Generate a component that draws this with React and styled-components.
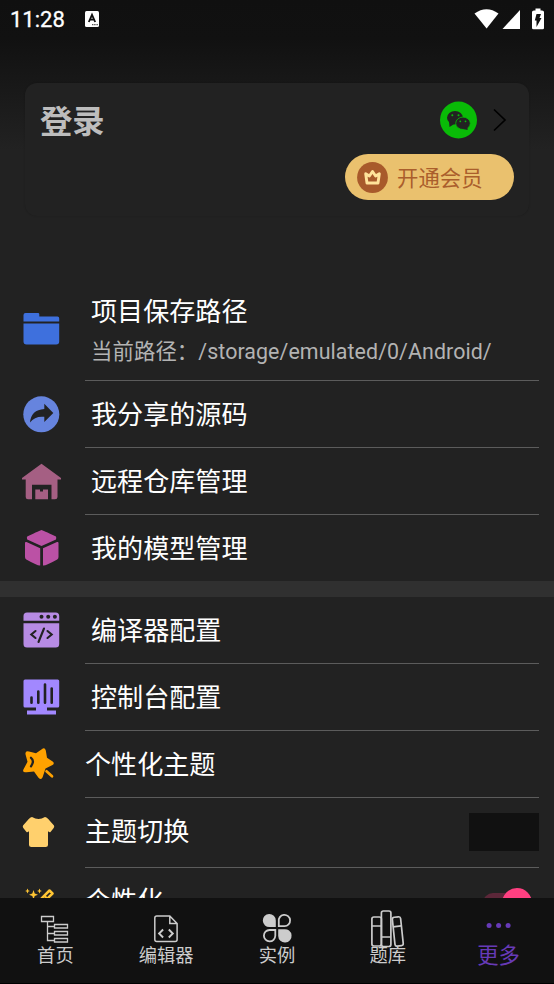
import React from "react";
import styled, { createGlobalStyle } from "styled-components";

const Global = createGlobalStyle`
  * { box-sizing: border-box; }
  body { margin: 0; background: #222; }
  svg { display: block; flex: none; }
`;

const Page = styled.div`
  width: 554px;
  height: 984px;
  display: flex;
  flex-direction: column;
  background: #222;
  color: #fff;
  font-family: Roboto, "Noto Sans CJK SC", sans-serif;
  overflow: hidden;
`;

const Content = styled.main`
  height: 898px;
  overflow: hidden;
  background: linear-gradient(#101010 0, #111 38px, #222 150px);
`;

const StatusBar = styled.header`
  height: 38px;
  display: flex;
  align-items: center;
  padding: 0 9px 0 10px;
`;

const Clock = styled.span`
  font-size: 22px;
  font-weight: 400;
  -webkit-text-stroke: 0.3px #fff;
  line-height: 38px;
  width: 74px;
  padding-top: 1px;
`;

const StatusIcons = styled.div`
  display: flex;
  margin-left: auto;
`;

const LoginCard = styled.section`
  width: 504px;
  height: 133px;
  margin: 45px 25px 0;
  border-radius: 12px;
  background: #222;
  box-shadow: 0 0 2px rgba(0, 0, 0, 0.2);
  padding: 18px 15px 16px 15px;
  display: flex;
  flex-direction: column;
  justify-content: space-between;
`;

const LoginLine = styled.div`
  display: flex;
  align-items: center;
  height: 38px;
`;

const LoginTitle = styled.h1`
  margin: 0 auto 0 0;
  padding-top: 4px;
  font-size: 32.3px;
  line-height: 38px;
  font-weight: 700;
  color: #bdbdbd;
`;

const VipButton = styled.button`
  align-self: flex-end;
  display: flex;
  align-items: center;
  gap: 9px;
  width: 169px;
  height: 46px;
  padding: 0 0 0 12px;
  border: 0;
  border-radius: 23px;
  background: #eac16e;
  color: #aa5e2c;
  font: 400 21.4px/44px Roboto, "Noto Sans CJK SC", sans-serif;
`;

const VipLabel = styled.span`
  padding-top: 3px;
`;

const Menu = styled.div`
  padding-top: 60px;
`;

const Row = styled.div`
  height: ${(p) => p.$height || 67}px;
  display: flex;
  align-items: center;
  padding-right: 15px;
`;

const IconCell = styled.div`
  width: 85px;
  flex: none;
  padding-left: ${(p) => (p.$inset ? 21 : 18)}px;
`;

const RowBody = styled.div`
  flex: 1;
  height: 100%;
  display: flex;
  align-items: center;
  justify-content: space-between;
  padding-left: ${(p) => (p.$inset ? 6 : 0)}px;
  border-bottom: 1px solid ${(p) => (p.$last ? "transparent" : "#5c5c5c")};
`;

const RowText = styled.div`
  display: flex;
  flex-direction: column;
  margin-top: ${(p) => p.$shift}px;
`;

const RowTitle = styled.span`
  font-size: 26.1px;
  line-height: 40px;
`;

const RowNote = styled.span`
  font-size: 21.4px;
  line-height: 39px;
  letter-spacing: 0.07px;
  color: #b3b3b3;
  white-space: nowrap;
`;

const Band = styled.div`
  height: 16px;
  background: #303030;
`;

const Swatch = styled.div`
  width: 70px;
  height: 38px;
  margin-bottom: 2px;
  background: #111;
`;

const Switch = styled.div`
  width: 49px;
  height: 20px;
  margin: 5px 7px 0 0;
  border-radius: 10px;
  background: #5c2739;
  display: flex;
  align-items: center;
  justify-content: flex-end;
`;

const Thumb = styled.div`
  width: 30px;
  height: 30px;
  flex: none;
  border-radius: 50%;
  background: #ff4081;
`;

const Nav = styled.nav`
  height: 86px;
  display: grid;
  grid-template-columns: repeat(5, 1fr);
  background: #111;
  border-bottom: 1px solid #000;
`;

const NavItem = styled.div`
  display: flex;
  flex-direction: column;
  align-items: center;
  padding-top: 10px;
  color: ${(p) => (p.$active ? "#673ab7" : "#ccc")};
`;

const NavLabel = styled.span`
  font-size: ${(p) => (p.$active ? 21.3 : 18.3)}px;
  line-height: 20px;
  margin-top: -2px;
`;

const D = "#222";

const KeyboardIcon = () => (
  <svg width="16" height="18" viewBox="0 0 16 18">
    <rect x="1" y="1" width="14" height="16" rx="1.5" fill="#fff" />
    <path d="M4.8 12 8 4.8l3.2 7.2M6 9.7h4" fill="none" stroke="#111" strokeWidth="1.8" />
    <path d="M8 14.7h6" stroke="#333" strokeWidth="1" strokeDasharray="1.2 .5" />
  </svg>
);

const SignalIcons = () => (
  <svg width="72" height="24" viewBox="473 7 72 24">
    <path d="M474.5 13.6Q486.500 5 498.500 13.600L486.600 28.500Z" fill="#fff" />
    <path d="M520 10V29H502.500Z" fill="#fff" />
    <path d="M535.500 8.500H540.500V10.500H542Q544 10.500 544 12V28Q544 29.300 542.700 29.300H533.500Q532 29.300 532 28V12Q532 10.500 534 10.500H535.500Z" fill="#fff" />
    <path d="M536.500 14H541L539.500 18H541.500L536.500 27V20.500H534.800Z" fill="#111" />
  </svg>
);

const WeChatIcon = () => (
  <svg width="38" height="38" viewBox="440 101 38 38">
    <circle cx="458.500" cy="120" r="18.500" fill="#09bb07" />
    <ellipse cx="455" cy="117.700" rx="8" ry="6.800" fill={D} />
    <path d="M449 121.500 449.500 127 455 123.500Z" fill={D} />
    <ellipse cx="463" cy="123.300" rx="7.300" ry="6.200" fill={D} stroke="#09bb07" strokeWidth=".8" />
    <path d="M463 129 467.600 130 467.500 126Z" fill={D} />
    <g fill="#09bb07"><circle cx="452.300" cy="115.300" r="1" /><circle cx="458.500" cy="115.300" r="1" /><circle cx="460.300" cy="121.300" r=".9" /><circle cx="465.500" cy="121.300" r=".9" /></g>
  </svg>
);

const ChevronIcon = () => (
  <svg width="36" height="26" viewBox="478 107 36 26">
    <path d="M494 109.500 505 120 494 130.500" fill="none" stroke="#000" strokeWidth="1.700" />
  </svg>
);

const CrownIcon = () => (
  <svg width="31" height="31" viewBox="357 162 31 31">
    <circle cx="372.500" cy="177.500" r="15.400" fill="#a85a2b" />
    <path d="M365.700 173.800 369.400 176 372.500 171.500 375.600 176 379.300 173.800 378 183H367Z" fill="none" stroke="#ffe39b" strokeWidth="2.900" strokeLinejoin="round" />
  </svg>
);

const RowIcon = ({ x = 21, y, children }) => (
  <svg width="40" height="40" viewBox={`${x} ${y} 40 40`}>{children}</svg>
);

const FolderIcon = () => (
  <RowIcon y={308.500}>
    <path d="M23.500 321V314.500Q23.500 312.500 25.500 312.500H38Q39.300 312.500 39.300 313.800V316H57.500Q59.200 316 59.200 317.700V321ZM23.500 323H59.200V341Q59.200 344 56.200 344H26.500Q23.500 344 23.500 341Z" fill="#3e70dd" />
  </RowIcon>
);

const ShareIcon = () => (
  <RowIcon y={394.700}>
    <circle cx="41.300" cy="414" r="18" fill="#6684de" />
    <path d="M44.300 403.500 53.300 412.700 44.300 421.800V416.500Q35 415.500 30 422.200Q31 409.500 44.300 408.600Z" fill={D} />
  </RowIcon>
);

const WarehouseIcon = () => (
  <RowIcon y={461.500}>
    <path d="M41.500 463.200 61 477.500V479H57.500V496.500Q57.500 498.800 55 498.800H51.500V484.200H32V498.800H28Q25.700 498.800 25.700 496.500V479H22V477.500Z" fill="#a55f83" />
    <path d="M35.300 489H40V491H43V489H48V498.800H35.300Z" fill="#a55f83" />
  </RowIcon>
);

const CubeIcon = () => (
  <RowIcon y={528}>
    <path d="M41.500 530Q42.300 530 56 536.500Q56.500 537.500 56 539.500L41.500 546 27.200 539.500Q26.500 537.500 27.200 536.500Q40.700 530 41.500 530ZM25 543Q25 541.500 26.500 542L40.200 548.300V565.500Q38.500 566.300 26.300 559.500Q25 558.500 25 557ZM58.500 543Q58.500 541.500 57 542L43 548.300V565.500Q45 566.300 57.200 559.500Q58.500 558.500 58.500 557Z" fill="#bb51a5" />
  </RowIcon>
);

const CompilerIcon = () => (
  <RowIcon y={610.500}>
    <path d="M23.500 620.300V615.500Q23.500 612 27 612H55.700Q59.200 612 59.200 615.500V620.300ZM23.500 622.700H59.200V643.500Q59.200 647 55.700 647H27Q23.500 647 23.500 643.500Z" fill="#b78be4" />
    <g fill={D}><circle cx="41.500" cy="616.300" r="2" /><circle cx="48.200" cy="616.300" r="2" /><circle cx="54.900" cy="616.300" r="2" /></g>
    <path d="M35.500 630.500 31.300 634 35.500 637.500M47.500 630.500 51.700 634 47.500 637.500M44 628 38.500 641.500" fill="none" stroke={D} strokeWidth="2.100" strokeLinecap="round" />
  </RowIcon>
);

const ConsoleIcon = () => (
  <RowIcon y={677.500}>
    <path d="M25 679H57.700Q59.200 679 59.200 680.500V705.500Q59.200 707 57.700 707H47V710H56V714H27V710H36V707H25Q23.500 707 23.500 705.500V680.500Q23.500 679 25 679Z" fill="#a288ff" />
    <path d="M31.500 697V702.300M38.300 691V702.300M45 684V702.300M51.700 688V702.300" stroke={D} strokeWidth="2.600" strokeLinecap="round" />
  </RowIcon>
);

const StarIcon = () => (
  <RowIcon x={18} y={744.700}>
    <path d="M41.800 749Q44.700 746.500 45.800 750.300L47 757.500 53 761.500Q54.800 763.200 52.500 764.700L45.500 768.200 42.600 777Q41.300 780.200 38.500 777.500L34 771.200 26.500 772Q22.300 772.500 23.300 769.500L27.500 761.500 25.500 754Q25 750.200 29 751.200L36 753Z" fill="#ffa200" />
    <path d="M46.500 771 52 776" stroke="#ffa200" strokeWidth="2.700" strokeLinecap="round" />
    <path d="M31 757.500Q34.800 760.500 31 766" fill="none" stroke={D} strokeWidth="2.300" strokeLinecap="round" />
  </RowIcon>
);

const ShirtIcon = () => (
  <RowIcon x={18} y={813}>
    <path d="M32 817Q38.500 821 45 817Q46.300 817 48 818.700L54 825.500Q54.600 826.500 53.700 828L50.500 832Q49.700 832.600 48 831.300V844.500Q48 847 45.500 847H31.500Q29 847 29 844.500V831.300Q27.300 832.600 26.500 832L23.300 828Q22.400 826.500 23 825.500L29 818.700Q30.700 817 32 817Z" fill="#ffd06d" />
  </RowIcon>
);

const WandIcon = () => (
  <RowIcon x={18} y={881}>
    <path d="M49.500 890.500 52.500 893.500 29 917 26 914Z" fill="none" stroke="#ffc533" strokeWidth="2.500" strokeLinejoin="round" />
    <path d="M44.500 896 48 899.500" stroke="#ffc533" strokeWidth="2.400" />
    <path d="M27.500 888.500 28.400 890.400 30 891 28.400 891.600 27.500 893.500 26.600 891.600 25 891 26.600 890.400ZM39.500 888.500 40.400 890.400 42 891 40.400 891.600 39.500 893.500 38.600 891.600 37 891 38.600 890.400ZM33.500 890 34.700 893.500 38 894.700 34.700 896 33.500 899.500 32.300 896 29 894.700 32.300 893.500Z" fill="#ffc533" />
  </RowIcon>
);

const NavIcon = ({ x, children }) => (
  <svg width="40" height="40" viewBox={`${x} 908 40 40`} fill="none" stroke="#ccc" strokeWidth="1.500">{children}</svg>
);

const TreeIcon = () => (
  <NavIcon x={35.400}>
    <path d="M41.900 916.500H53.900V921.500H41.900ZM54.900 924.500H67.900V928H54.900ZM54.900 931.500H67.900V935H54.900ZM54.900 938.500H67.900V942H54.900ZM47.900 921.500V940.500H54.400M47.900 926.500H54.400M47.900 933.500H54.400" strokeWidth="1.300" />
  </NavIcon>
);

const EditorIcon = () => (
  <NavIcon x={146.200}>
    <path d="M157 916H170L177.300 923.500V939.500Q177.300 941.500 175.300 941.500H157Q155 941.500 155 939.500V918Q155 916 157 916ZM170 916V923.500H177.300" />
    <path d="M163.300 929.500 159.300 933.500 163.300 937.500M169 929.500 173 933.500 169 937.500" strokeWidth="1.900" />
  </NavIcon>
);

const CloverIcon = () => (
  <NavIcon x={257}>
    <path d="M275.800 927H269.800A6.500 6.500 0 1 1 275.800 920.500Z" fill="#ccc" stroke="none" />
    <path d="M278.800 926.200V921.500A5.700 5.700 0 1 1 284.500 926.200ZM275.300 930V935.800A5.700 5.700 0 1 1 269.500 930Z" strokeWidth="1.800" />
    <path d="M278.200 929.200H284A6.700 6.700 0 1 1 278.200 936Z" fill="#ccc" stroke="none" />
  </NavIcon>
);

const BooksIcon = () => (
  <NavIcon x={367.800}>
    <g strokeWidth="1.700">
      <rect x="371.700" y="917" width="9.500" height="29" rx="2" />
      <rect x="381.200" y="911" width="9.500" height="35.500" rx="2" />
      <path d="M371.700 926H381.200M381.200 937H390.700" />
      <rect x="393.500" y="917" width="8.300" height="29" rx="2" transform="rotate(-6 397 932)" />
      <path d="M392.700 926.800 400.900 925.900" />
    </g>
  </NavIcon>
);

const DotsIcon = () => (
  <NavIcon x={478.900}>
    <g fill="#673ab7" stroke="none"><circle cx="489" cy="925.500" r="2.500" /><circle cx="498.500" cy="925.500" r="2.500" /><circle cx="508" cy="925.500" r="2.500" /></g>
  </NavIcon>
);

function MenuRow({ icon, title, note, inset, height, last, shift = 2, children }) {
  return (
    <Row $height={height}>
      <IconCell $inset={inset}>{icon}</IconCell>
      <RowBody $inset={inset} $last={last}>
        <RowText $shift={shift}>
          <RowTitle>{title}</RowTitle>
          {note && <RowNote>{note}</RowNote>}
        </RowText>
        {children}
      </RowBody>
    </Row>
  );
}

const tabs = [
  { label: "首页", icon: <TreeIcon /> },
  { label: "编辑器", icon: <EditorIcon /> },
  { label: "实例", icon: <CloverIcon /> },
  { label: "题库", icon: <BooksIcon /> },
  { label: "更多", icon: <DotsIcon />, active: true },
];

export default function App() {
  return (
    <Page>
      <Global />
      <Content>
        <StatusBar>
          <Clock>11:28</Clock>
          <KeyboardIcon />
          <StatusIcons><SignalIcons /></StatusIcons>
        </StatusBar>
        <LoginCard>
          <LoginLine>
            <LoginTitle>登录</LoginTitle>
            <WeChatIcon />
            <ChevronIcon />
          </LoginLine>
          <VipButton><CrownIcon /><VipLabel>开通会员</VipLabel></VipButton>
        </LoginCard>
        <Menu>
          <MenuRow inset height={105} shift={6} icon={<FolderIcon />} title="项目保存路径" note="当前路径：/storage/emulated/0/Android/" />
          <MenuRow inset icon={<ShareIcon />} title="我分享的源码" />
          <MenuRow inset icon={<WarehouseIcon />} title="远程仓库管理" />
          <MenuRow inset height={66} last icon={<CubeIcon />} title="我的模型管理" />
          <Band />
          <MenuRow inset icon={<CompilerIcon />} title="编译器配置" />
          <MenuRow inset icon={<ConsoleIcon />} title="控制台配置" />
          <MenuRow icon={<StarIcon />} title="个性化主题" />
          <MenuRow height={70} shift={-2} icon={<ShirtIcon />} title="主题切换"><Swatch /></MenuRow>
          <MenuRow height={66} shift={0} last icon={<WandIcon />} title="个性化"><Switch><Thumb /></Switch></MenuRow>
        </Menu>
      </Content>
      <Nav>
        {tabs.map((t) => (
          <NavItem key={t.label} $active={t.active}>
            {t.icon}
            <NavLabel $active={t.active}>{t.label}</NavLabel>
          </NavItem>
        ))}
      </Nav>
    </Page>
  );
}
